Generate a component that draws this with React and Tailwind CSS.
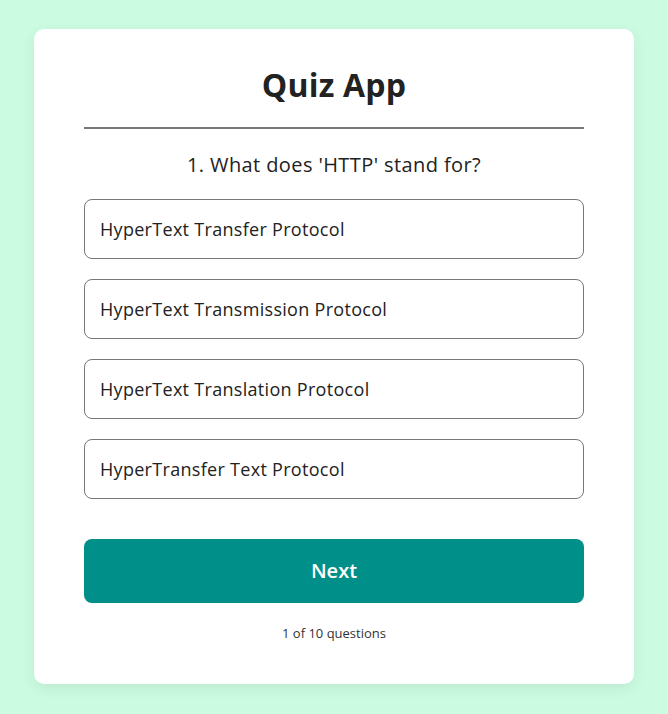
export default function App() {
  const options = [
    "HyperText Transfer Protocol",
    "HyperText Transmission Protocol",
    "HyperText Translation Protocol",
    "HyperTransfer Text Protocol",
  ];
  return (
    <div
      className="min-h-[714px] w-full bg-[#cbfce2] pt-[29px] pb-[30px]"
      style={{ fontFamily: "'Open Sans', 'Liberation Sans', sans-serif" }}
    >
      <div className="mx-auto w-[600px] rounded-[10px] bg-white px-[50px] pt-[32px] pb-[40px] shadow-[0_4px_14px_rgba(0,0,0,0.08)] text-[#222]">
        <h1 className="text-center text-[32px] font-bold leading-[48px] text-[#222] tracking-[0.2px]">Quiz App</h1>
        <div className="mt-[18px] h-[2px] bg-[#777]" />
        <h2 className="mt-[21px] text-center text-[20px] font-medium leading-[30px] text-[#222] tracking-[0.4px]">
          1. What does 'HTTP' stand for?
        </h2>
        <ul className="mt-[19px] flex flex-col gap-[20px]">
          {options.map((o) => (
            <li
              key={o}
              className="flex h-[60px] items-center rounded-[8px] border border-[#777] px-[15px] text-[18px] tracking-[0.3px] text-[#222]"
            >
              {o}
            </li>
          ))}
        </ul>
        <button className="mt-[40px] flex h-[64px] w-full items-center justify-center rounded-[8px] bg-[#008f89] text-[20px] font-semibold text-white">
          Next
        </button>
        <p className="mt-[20px] text-center text-[13px] leading-[21px] text-[#333]">1 of 10 questions</p>
      </div>
    </div>
  );
}
